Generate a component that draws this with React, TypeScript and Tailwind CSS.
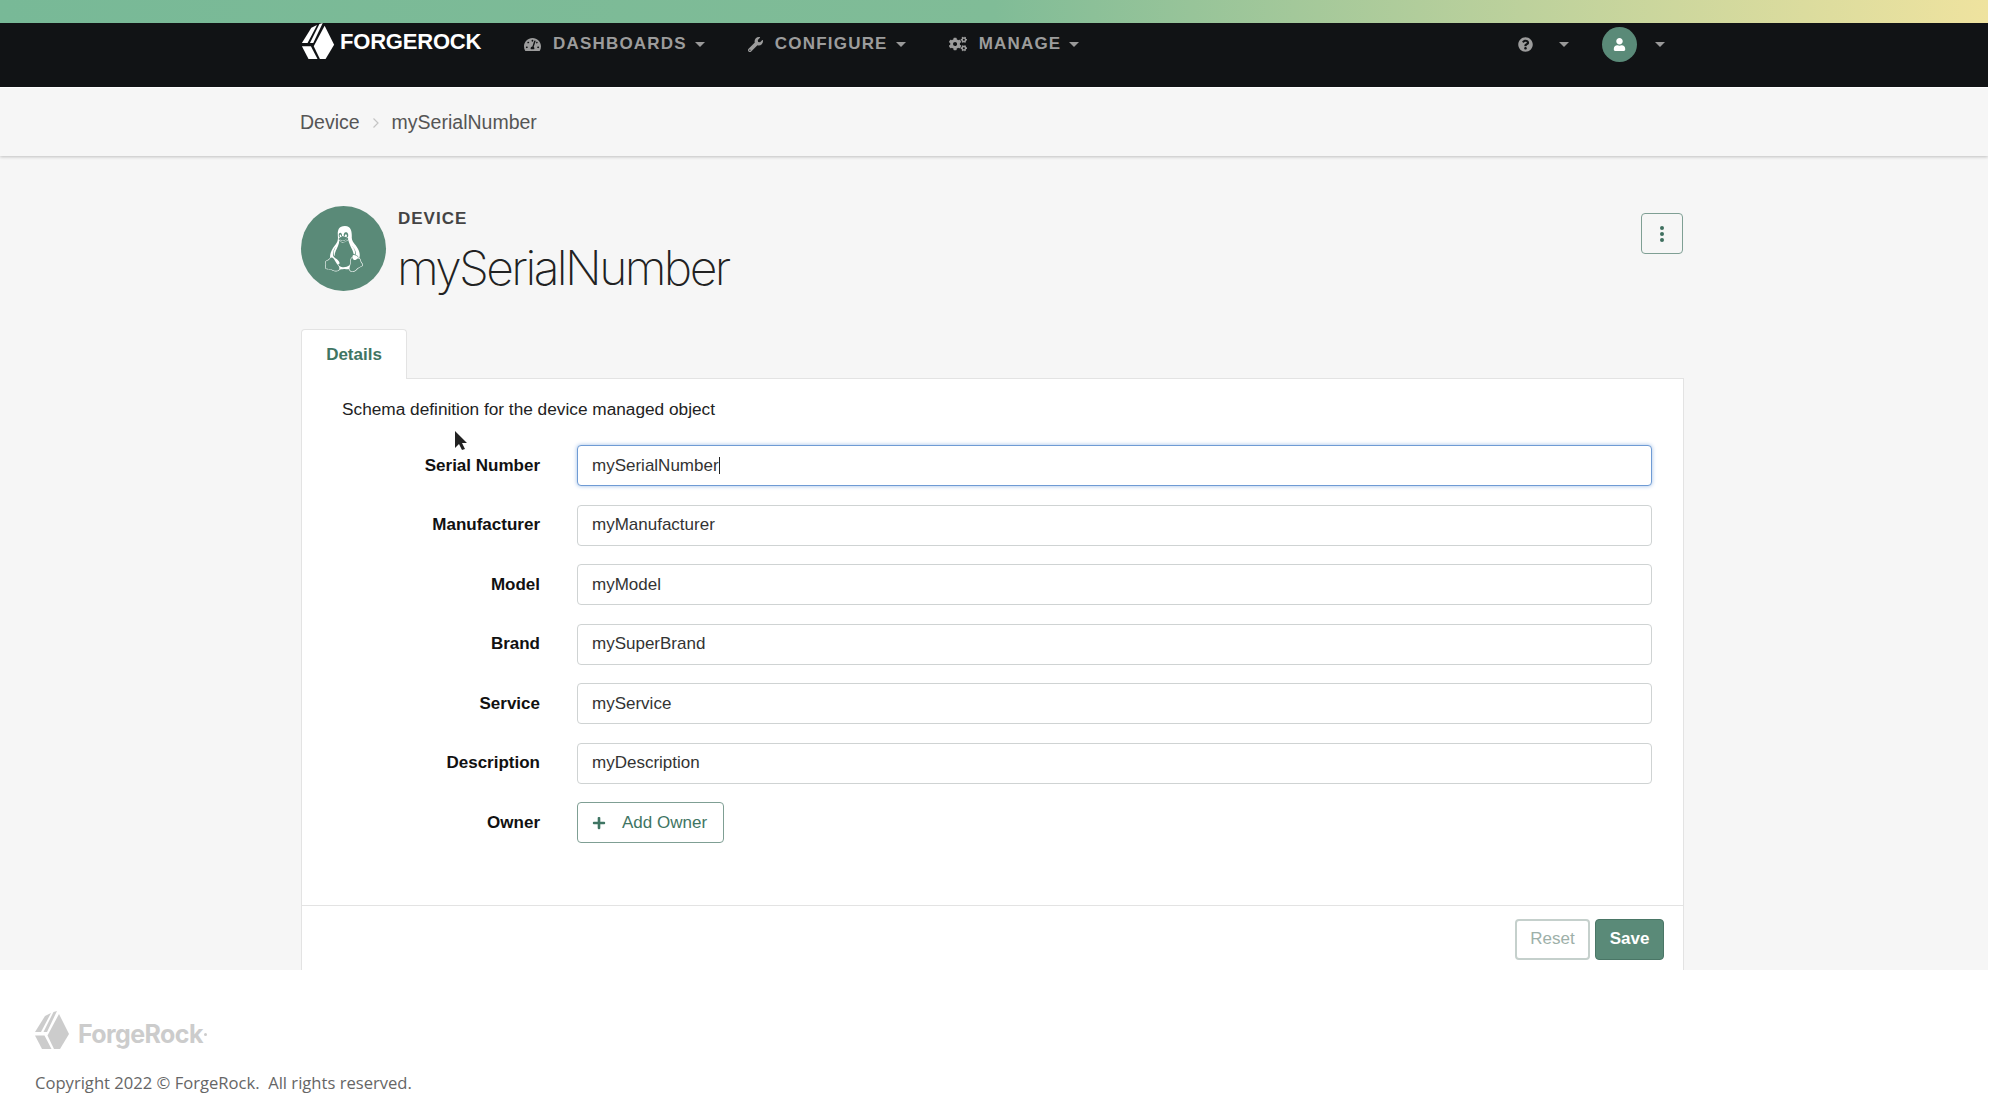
import React from 'react';
import { FaCogs, FaLinux, FaPlus, FaQuestionCircle, FaTachometerAlt, FaUser, FaWrench } from 'react-icons/fa';

const FIELDS = [
  { label: 'Serial Number', value: 'mySerialNumber', focused: true },
  { label: 'Manufacturer', value: 'myManufacturer' },
  { label: 'Model', value: 'myModel' },
  { label: 'Brand', value: 'mySuperBrand' },
  { label: 'Service', value: 'myService' },
  { label: 'Description', value: 'myDescription' },
];

const Caret = () => (
  <span className="inline-block h-0 w-0 border-x-[5px] border-t-[5px] border-x-transparent border-t-[#999]" />
);

const LogoMark = ({ className, fill }: { className: string; fill: string }) => (
  <svg viewBox="0 0 34 38" className={className} fill={fill}>
    <polygon points="0,21 10,5 16,2 6,21" />
    <polygon points="8.500,21 18.500,1 22,0 12,21" />
    <polygon points="24,3 34,23 25,38 19,38 12.500,24.500" />
    <polygon points="0,24.500 9.500,24.500 16.500,38 7,38" />
  </svg>
);

const NavItem = ({ icon, label }: { icon: React.ReactNode; label: string }) => (
  <a className="flex items-center gap-[12px] text-[17px] font-bold tracking-[1.2px] text-[#9c9c9c]">
    {icon}
    <span>{label}</span>
    <span className="-ml-[4px] flex"><Caret /></span>
  </a>
);

const Header = () => (
  <header className="flex h-[64px] bg-[#111315] pl-[300px]">
    <div className="flex h-[44px] w-[224px] items-start">
      <LogoMark className="h-[36px] w-[36px]" fill="#ffffff" />
      <span className="ml-[4px] mt-[7px] text-[22px] font-bold leading-[24px] tracking-[-0.2px] text-white">FORGEROCK</span>
    </div>
    <nav className="flex h-[42px] items-center gap-[43px]">
      <NavItem icon={<FaTachometerAlt className="text-[17px]" />} label="DASHBOARDS" />
      <NavItem icon={<FaWrench className="text-[15px]" />} label="CONFIGURE" />
      <NavItem icon={<FaCogs className="text-[18px]" />} label="MANAGE" />
    </nav>
    <div className="ml-[439px] flex h-[42px] items-center">
      <FaQuestionCircle className="text-[15px] text-[#9c9c9c]" />
      <span className="ml-[26px] flex"><Caret /></span>
      <div className="ml-[33px] flex h-[35px] w-[35px] items-center justify-center rounded-full bg-[#5a8a78]">
        <FaUser className="text-[13px] text-white" />
      </div>
      <span className="ml-[18px] flex"><Caret /></span>
    </div>
  </header>
);

const Field = ({ label, value, focused }: { label: string; value: string; focused?: boolean }) => (
  <div className="flex h-[41px] items-center">
    <label className="w-[238px] text-right text-[17px] font-bold text-[#111]">{label}</label>
    <div
      className={
        'ml-[37px] flex h-[41px] w-[1075px] items-center rounded-[4px] border bg-white px-[14px] text-[17px] text-[#333] ' +
        (focused ? 'border-[#6f9bd4] shadow-[0_0_4px_#9dbde6]' : 'border-[#cfd3d3]')
      }
    >
      {value}
      {focused && <span className="h-[17px] w-px bg-[#222]" />}
    </div>
  </div>
);

export default function App() {
  return (
    <div className="w-[1988px] font-['Liberation_Sans',sans-serif]">
      <div className="h-[23px] bg-gradient-to-r from-[#78b997] via-[#80bc97] via-50% to-[#efe39f]" />
      <Header />
      <div className="relative h-[883px] overflow-hidden bg-[#f6f6f6]">
        <div className="flex h-[69px] items-center border-t border-white pl-[300px] pt-[2px] text-[19.5px] text-[#555] shadow-[0_1px_3px_rgba(0,0,0,0.22)]">
          <span>Device</span>
          <svg viewBox="0 0 8 12" className="mx-[12px] h-[12px] w-[8px]" fill="none" stroke="#c4c4c4" strokeWidth="1.2">
            <path d="M1.5 1.500 6 6l-4.500 4.500" />
          </svg>
          <span>mySerialNumber</span>
        </div>

        <div className="ml-[301px] w-[1383px]">
          <div className="flex items-start justify-between pt-[50px]">
            <div className="flex h-[85px]">
              <div className="flex h-[85px] w-[85px] items-center justify-center rounded-full bg-[#5a8a78]">
                <FaLinux className="text-[46px] text-white" />
              </div>
              <div className="ml-[12px]">
                <div className="mt-[3px] text-[17px] font-bold leading-[20px] tracking-[1px] text-[#444]">DEVICE</div>
                <h1 className="-ml-px mt-[10px] font-['Inter',sans-serif] text-[48px] font-extralight leading-[58px] tracking-[-2.6px] text-[#222]">mySerialNumber</h1>
              </div>
            </div>
            <button className="mr-px mt-[7px] flex h-[41px] w-[42px] flex-col items-center justify-center gap-[2px] rounded-[4px] border border-[#7f9f94]">
              <span className="h-[4px] w-[4px] rounded-full bg-[#3f6f5f]" />
              <span className="h-[4px] w-[4px] rounded-full bg-[#3f6f5f]" />
              <span className="h-[4px] w-[4px] rounded-full bg-[#3f6f5f]" />
            </button>
          </div>

          <div className="relative z-10 -mb-px mt-[38px] flex h-[50px] w-[106px] items-center justify-center rounded-t-[4px] border border-b-0 border-[#e3e3e3] bg-white text-[17px] font-bold text-[#3f7563]">
            Details
          </div>
          <section className="relative h-[600px] border border-[#e3e3e3] bg-white">
            <p className="ml-[40px] mt-[20px] text-[17.25px] leading-[20px] text-[#222]">Schema definition for the device managed object</p>
            <div className="mt-[26px] flex flex-col gap-[18.5px]">
              {FIELDS.map((f) => (
                <Field key={f.label} {...f} />
              ))}
              <div className="flex h-[41px] items-center">
                <label className="w-[238px] text-right text-[17px] font-bold text-[#111]">Owner</label>
                <button className="ml-[37px] flex h-[41px] w-[147px] items-center rounded-[4px] border border-[#7f9f94] pl-[14px] text-[17px] text-[#3f7563]">
                  <FaPlus className="text-[14px]" />
                  <span className="ml-[16px]">Add Owner</span>
                </button>
              </div>
            </div>
            <div className="mt-[61.5px] flex h-[66px] justify-end gap-[5px] border-t border-[#e3e3e3] pr-[19px] pt-[13px]">
              <button className="h-[41px] w-[75px] rounded-[4px] border-2 border-[#c5d0cc] text-[17px] text-[#9db0a9]">Reset</button>
              <button className="h-[41px] w-[69px] rounded-[4px] border border-[#4a7666] bg-[#5a8a78] text-[17px] font-bold text-white">Save</button>
            </div>
            {/* mouse pointer captured in the recording */}
            <svg viewBox="0 0 14 20" className="absolute left-[152px] top-[52px] h-[20px] w-[14px]" fill="#222">
              <path d="M1 0v17l4-4 3 6 3-1-3-6h5z" />
            </svg>
          </section>
        </div>
      </div>

      <footer className="h-[142px] bg-white pl-[35px] pt-[45px] font-['Open_Sans',sans-serif]">
        <div className="flex h-[38px] items-center">
          <LogoMark className="-mt-[8px] h-[40px] w-[34px]" fill="#cccccc" />
          <span className="ml-[9px] font-['Inter',sans-serif] text-[25px] font-bold leading-[30px] tracking-[-0.6px] text-[#cccccc]">ForgeRock</span>
          <span className="ml-[1px] h-[3px] w-[3px] rounded-full bg-[#ccc]" />
        </div>
        <p className="mt-[19px] text-[16.6px] leading-[22px] text-[#666]">Copyright 2022 © ForgeRock.&nbsp; All rights reserved.</p>
      </footer>
    </div>
  );
}
